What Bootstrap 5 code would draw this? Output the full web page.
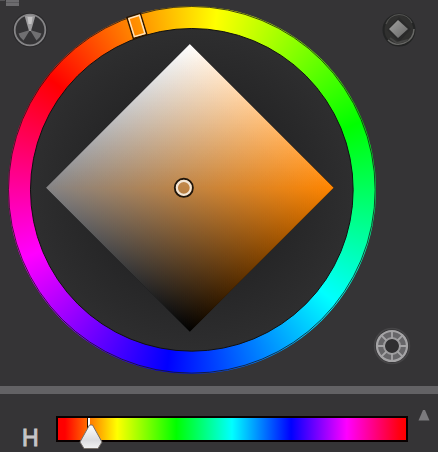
<!DOCTYPE html>
<html lang="en">
<head>
<meta charset="utf-8">
<meta name="viewport" content="width=device-width, initial-scale=1">
<title>Color wheel</title>
<link href="https://cdn.jsdelivr.net/npm/bootstrap@5.3.0/dist/css/bootstrap.min.css" rel="stylesheet">
<style>
body { background: #353436; font-family: "Liberation Sans", Arial, sans-serif; }
.wheel-area { padding: 6px 0 12px 8px; }
.hue-ring { width: 85.5%; aspect-ratio: 1; border-radius: 50%;
  background: conic-gradient(from -52deg, #f00, #ff0, #0f0, #0ff, #00f, #f0f, #f00); }
.add { mix-blend-mode: plus-lighter; }
.blend-group { isolation: isolate; }
.tool-btn { line-height: 0; }
.at-left { top: 12px; left: 12px; }
.at-right { top: 12px; right: 21px; }
.at-bottom { bottom: 21px; right: 27px; }
.at-menu { top: 0; left: 0; }
.splitter { height: 8px; background: #636265; }
.hue-row { padding: 14px 0 0 22px; }
.hue-label { font-size: 23px; line-height: 28px; color: #c6c5c8; -webkit-text-stroke: 1px #c6c5c8; width: 34px; padding-top: 16px; height: 44px; }
.hue-track { height: 26px; border: 2px solid #080000;
  background: linear-gradient(90deg, #f00 2%, #ff0 17%, #0f0 34%, #0ff 50%, #00f 67%, #f0f 83%, #f01 98%, #f00); }
.hue-range { appearance: none; -webkit-appearance: none; background: none; width: calc(100% + 24px); height: 32px; margin: 0 -12px; }
.hue-range::-webkit-slider-runnable-track { height: 32px; background: none; }
.hue-range::-webkit-slider-thumb { -webkit-appearance: none; width: 24px; height: 32px; border: 0;
  background: url("data:image/svg+xml,%3Csvg xmlns='http://www.w3.org/2000/svg' viewBox='0 0 24 32'%3E%3ClinearGradient id='g' x2='0' y2='1'%3E%3Cstop stop-color='%23fff'/%3E%3Cstop offset='.65' stop-color='%23dcdcdf'/%3E%3Cstop offset='1' stop-color='%23f2f2f2'/%3E%3C/linearGradient%3E%3Cpath d='M8 0h2v10H8z' fill='%23201000'/%3E%3Cpath d='M9 0h2v10H9z' fill='%23fff'/%3E%3Cpath d='M10.500 7H13.500L23 24L19 30.500H5L1 24Z' fill='url(%23g)' stroke='%2377706a' stroke-linejoin='round'/%3E%3C/svg%3E"); }
.step-col { width: 30px; padding: 2px 0 0 2px; }
</style>
<script src="https://cdn.jsdelivr.net/npm/bootstrap@5.3.0/dist/js/bootstrap.bundle.min.js"></script>
</head>
<body>
<main>
  <section class="wheel-area position-relative" aria-label="Color wheel">
    <div class="hue-ring">
      <svg class="d-block w-100 h-100" viewBox="0 0 368 368" role="img" aria-label="Saturation and lightness">
        <defs>
          <radialGradient id="disc"><stop offset=".45" stop-color="#222223"/><stop offset="1" stop-color="#2e2e2f"/></radialGradient>
          <linearGradient id="white" gradientUnits="userSpaceOnUse" x1="0" y1="182" x2="0" y2="38"><stop stop-color="#fff" stop-opacity="0"/><stop offset="1" stop-color="#fff"/></linearGradient>
          <linearGradient id="grayTop" gradientUnits="userSpaceOnUse" x1="182" y1="38" x2="38" y2="182"><stop stop-color="#858486" stop-opacity="0"/><stop offset="1" stop-color="#858486"/></linearGradient>
          <linearGradient id="hueTop" gradientUnits="userSpaceOnUse" x1="182" y1="38" x2="326" y2="182"><stop stop-color="#ff8500" stop-opacity="0"/><stop offset="1" stop-color="#ff8500"/></linearGradient>
          <linearGradient id="grayLow" gradientUnits="userSpaceOnUse" x1="182" y1="326" x2="38" y2="182"><stop stop-color="#858486" stop-opacity="0"/><stop offset="1" stop-color="#858486"/></linearGradient>
          <linearGradient id="hueLow" gradientUnits="userSpaceOnUse" x1="182" y1="326" x2="326" y2="182"><stop stop-color="#ff8500" stop-opacity="0"/><stop offset="1" stop-color="#ff8500"/></linearGradient>
        </defs>
        <circle cx="184" cy="184" r="183.500" fill="none" stroke="#181818" stroke-opacity=".8"/>
        <circle cx="184" cy="184" r="161.500" fill="url(#disc)" stroke="#101010"/>
        <g class="blend-group">
          <path d="M182 38L326 182L182 326L38 182Z" fill="#000"/>
          <path class="add" d="M38 182L182 38L326 182Z" fill="url(#white)"/>
          <path class="add" d="M38 182L182 38L326 182Z" fill="url(#grayTop)"/>
          <path class="add" d="M38 182L182 38L326 182Z" fill="url(#hueTop)"/>
          <path class="add" d="M38 182L182 326L326 182Z" fill="url(#grayLow)"/>
          <path class="add" d="M38 182L182 326L326 182Z" fill="url(#hueLow)"/>
        </g>
        <g fill="none">
          <circle cx="176" cy="182" r="9" stroke="#20160c" stroke-width="2"/>
          <circle cx="176" cy="182" r="7" stroke="#f3e6d6" stroke-width="2.200"/>
          <g transform="rotate(-17 129 20)">
            <rect x="122" y="9" width="14" height="22" stroke="#2a1600" stroke-width="1.500"/>
            <rect x="123.500" y="10.500" width="11" height="19" stroke="#ffe3bd" stroke-width="1.500"/>
          </g>
        </g>
      </svg>
    </div>

    <button type="button" class="tool-btn at-menu position-absolute btn p-0 border-0 rounded-0" aria-label="Panel menu">
      <svg width="20" height="7" viewBox="0 0 20 7"><path d="M0 0h5v1H0z" fill="#555457"/><path d="M6 0h13v6H6z" fill="#6c6b6e"/><path d="M6 2h13v1H6z" fill="#5b5a5d"/></svg>
    </button>
    <button type="button" class="tool-btn at-left position-absolute btn p-0 border-0" aria-label="Triad harmony">
      <svg width="36" height="36" viewBox="0 0 36 36">
        <circle cx="18" cy="18" r="16.500" fill="none" stroke="#2a292b" stroke-width="1.500"/>
        <path d="M18 18L6.500 21.500A12 12 0 0 0 11.500 28.500Z M18 18L29.500 21.500A12 12 0 0 1 24.500 28.500Z" fill="#706f71"/>
        <path d="M17 19L12.500 3.500Q18 1.500 23.500 3.500L19 19Z" fill="#9d9c9e"/>
        <path d="M16.500 12L15.500 5H20.500L19.500 12Z" fill="#c4c3c4"/>
        <circle cx="18" cy="18" r="15.300" fill="none" stroke="#858486" stroke-width="1.800"/>
      </svg>
    </button>
    <button type="button" class="tool-btn at-right position-absolute btn p-0 border-0" aria-label="Diamond shape">
      <svg width="36" height="36" viewBox="0 0 36 36">
        <defs><linearGradient id="gem" x1="0" y1="0" x2="1" y2="1"><stop stop-color="#a2a2a0"/><stop offset="1" stop-color="#666"/></linearGradient></defs>
        <circle cx="18" cy="18" r="15.500" fill="#30302f" stroke="#232424" stroke-width="2"/>
        <path d="M7 28A15.500 15.500 0 0 0 33 17" fill="none" stroke="#686866" stroke-width="1.500"/>
        <path d="M5 12A14 14 0 0 1 31 11" fill="none" stroke="#51514f" stroke-width="1.200"/>
        <path d="M18 5L30 17L18 30L6 18Z" fill="#2a2a2a"/>
        <path d="M17 8L27 17L17 26L8 17Z" fill="url(#gem)"/>
        <path d="M9 26L16 31L27 28" fill="none" stroke="#454544" stroke-width="2"/>
      </svg>
    </button>
    <button type="button" class="tool-btn at-bottom position-absolute btn p-0 border-0" aria-label="Wheel segments">
      <svg width="38" height="38" viewBox="0 0 38 38" fill="none">
        <circle cx="19" cy="19" r="17.500" stroke="#454446" stroke-width="1.500"/>
        <circle cx="19" cy="19" r="11" stroke="#676669" stroke-width="8"/>
        <circle cx="19" cy="19" r="15" stroke="#a5a4a6" stroke-width="2.200"/>
        <circle cx="19" cy="19" r="8" stroke="#9c9b9d" stroke-width="2"/>
        <path d="M19 4v8M19 26v8M4 19h8M26 19h8M8.400 8.400L13.500 13.500M24.500 24.500L29.600 29.600M29.600 8.400L24.500 13.500M13.500 24.500L8.400 29.600" stroke="#a5a4a6" stroke-width="1.800"/>
        <circle cx="19" cy="19" r="6.500" fill="#302f31"/>
      </svg>
    </button>
  </section>

  <div class="splitter"></div>

  <section class="hue-row d-flex align-items-start">
    <label class="hue-label" for="hue">H</label>
    <div class="pt-1 flex-grow-1">
      <div class="hue-track mt-1"><input class="hue-range d-block" type="range" id="hue" min="0" max="360" value="34"></div>
    </div>
    <div class="step-col d-flex justify-content-center">
      <button type="button" class="btn p-0 border-0 lh-1 d-flex" aria-label="Collapse">
        <svg width="12" height="11" viewBox="0 0 12 11"><path d="M5 0H7L11.500 10.500H.500Z" fill="#7b7a7d"/></svg>
      </button>
    </div>
  </section>
</main>
</body>
</html>
